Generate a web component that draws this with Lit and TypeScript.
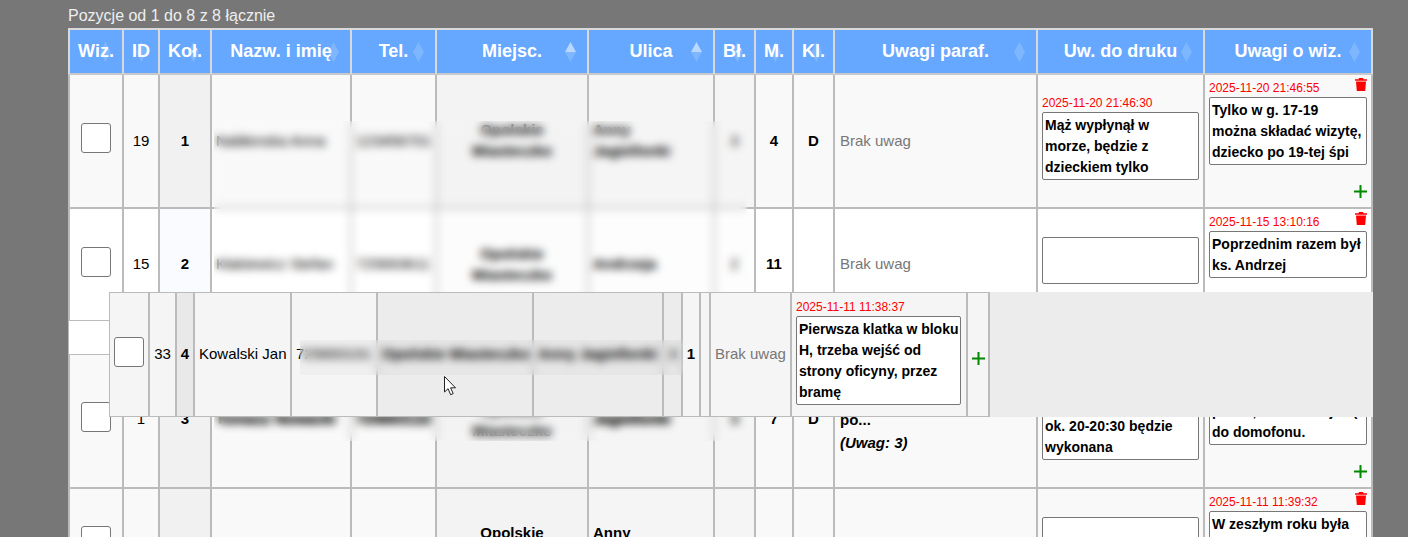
import { LitElement, html, css, nothing } from "lit";
import { customElement } from "lit/decorators.js";

const COLS = [56, 36, 52, 140, 85, 152, 126, 41, 38, 41, 203, 167, 168];
const DRAG_COLS = [41, 27, 18, 97, 86, 156, 130, 19, 18, 10, 81, 176, 22];
const HEAD: [string, string][] = [
  ["Wiz.", ""], ["ID", ""], ["Koł.", ""], ["Nazw. i imię", ""], ["Tel.", ""],
  ["Miejsc.", "asc"], ["Ulica", "asc"], ["Bł.", ""], ["M.", ""], ["Kl.", ""],
  ["Uwagi paraf.", ""], ["Uw. do druku", ""], ["Uwagi o wiz.", ""],
];

interface Row {
  cls: string; id: string; kol: string; name: string; tel: string;
  city: string; street: string; bl: string; m: string; kl: string;
  paraf: unknown; druk: { ts?: string; text: string }; wiz: { ts: string; text: string };
}

const ROWS: Row[] = [
  {
    cls: "r1 odd", id: "19", kol: "1", name: "Nabłonska Anna", tel: "123456701",
    city: "Opolskie\nMiasteczko", street: "Anny\nJagiellonki", bl: "3", m: "4", kl: "D",
    paraf: html`<span class="none">Brak uwag</span>`,
    druk: { ts: "2025-11-20 21:46:30", text: "Mąż wypłynął w\nmorze, będzie z\ndzieckiem tylko" },
    wiz: { ts: "2025-11-20 21:46:55", text: "Tylko w g. 17-19\nmożna składać wizytę,\ndziecko po 19-tej śpi" },
  },
  {
    cls: "r2 even", id: "15", kol: "2", name: "Kłakiewicz Stefan", tel: "725693611",
    city: "Opolskie\nMiasteczko", street: "Andrzeja", bl: "2", m: "11", kl: "",
    paraf: html`<span class="none">Brak uwag</span>`,
    druk: { text: "" },
    wiz: { ts: "2025-11-15 13:10:16", text: "Poprzednim razem był\nks. Andrzej" },
  },
  {
    cls: "r3 odd", id: "1", kol: "3", name: "Tomasz Nowacki", tel: "725693122",
    city: "Opolskie\nMiasteczko", street: "Jagiellonki", bl: "3", m: "7", kl: "D",
    paraf: html`<b class="stack">Prosi o telefon<br />przed wizytą, nie<br />po...<br /><i>(Uwag: 3)</i></b>`,
    druk: { ts: "2025-11-18 10:12:40", text: "Wizyta\nok. 20-20:30 będzie\nwykonana" },
    wiz: { ts: "2025-11-14 18:20:05", text: "Proszę dzwonić\npukać, bo nie ma już (\ndo domofonu." },
  },
  {
    cls: "r4 odd", id: "7", kol: "5", name: "Zielińska Maria", tel: "",
    city: "Opolskie\nMiasteczko", street: "Anny\nJagiellonki", bl: "2", m: "9", kl: "",
    paraf: html`<span class="none">Brak uwag</span>`,
    druk: { text: "" },
    wiz: { ts: "2025-11-11 11:39:32", text: "W zeszłym roku była\nwizyta" },
  },
];

const trash = html`<svg class="trash" viewBox="0 0 12 13" width="12" height="13" aria-hidden="true">
  <path fill="#f00" d="M4 0h4l.6 1.2H12v1.6H0V1.2h3.4zM1 3.6h10L10.2 13H1.8z" />
</svg>`;
const plus = html`<svg class="plus" viewBox="0 0 13 13" width="13" height="13" aria-hidden="true">
  <path fill="#080" d="M5.5 0h2v5.5H13v2H7.5V13h-2V7.5H0v-2h5.5z" />
</svg>`;
const sortIcon = (dir: string) => html`<svg class="sort" viewBox="0 0 11 20" width="11" height="20" aria-hidden="true">
  <path fill="#fff" fill-opacity=${dir === "asc" ? "0.55" : "0.16"} d="M5.5 0L11 10H0z" />
  <path fill="#fff" fill-opacity="0.16" d="M0 10h11L5.5 20z" />
</svg>`;

@customElement("app-root")
export class AppRoot extends LitElement {
  static styles = css`
    :host {
      display: block;
      position: relative;
      height: 537px;
      overflow: hidden;
      background: #777;
      font-family: "Liberation Sans", Arial, sans-serif;
      font-size: 15px;
      line-height: 21px;
      color: #000;
    }
    .info {
      height: 28px;
      box-sizing: border-box;
      padding: 7px 0 0 68px;
      font-size: 16px;
      line-height: 18px;
      color: #eee;
    }
    table {
      border-collapse: separate;
      border-spacing: 0;
      table-layout: fixed;
    }
    .main { width: 1305px; margin-left: 68px; }
    th {
      position: relative;
      z-index: 0;
      box-sizing: border-box;
      height: 47px;
      padding: 0;
      background: #66a8ff;
      color: #fff;
      font-size: 18px;
      font-weight: bold;
      text-align: center;
      border-top: 2px solid #d9d9d9;
      border-right: 2px solid #d9d9d9;
      border-bottom: 2px solid #c8c8c8;
    }
    th:first-child, .main td:first-child { border-left: 2px solid #bbb; }
    th:first-child { border-left-color: #d9d9d9; }
    .sort { position: absolute; right: 11px; top: 12px; z-index: -1; }
    td {
      box-sizing: border-box;
      padding: 0 4px 2px;
      text-align: center;
      vertical-align: middle;
      border-right: 2px solid #bbb;
      border-bottom: 2px solid #bbb;
      overflow: hidden;
      white-space: nowrap;
    }
    .odd td { background: #f9f9f9; }
    .even td { background: #fff; }
    .odd td.sort1 { background: #f1f1f1; }
    .odd td.sort2 { background: #f3f3f3; }
    .odd td.sort3 { background: #f5f5f5; }
    .even td.sort1 { background: #fafbff; }
    .even td.sort2 { background: #fcfcfc; }
    .even td.sort3 { background: #fdfdfd; }
    .r1 td { height: 134px; }
    .r2 td { height: 112px; border-bottom-width: 1px; }
    .gap td {
      height: 34px;
      background: #fff;
      border: none;
      border-left: 1px solid #bbb !important;
      border-bottom: 1px solid #bbb;
    }
    .r3 td { height: 134px; padding-bottom: 5px; }
    .r3 td.sort2 { padding-bottom: 2px; }
    .r4 td { height: 112px; }
    .left { text-align: left; }
    .pre { white-space: pre; }
    .b { font-weight: bold; }
    .r3 .name { font-weight: bold; text-shadow: 0 0 1px #000; }
    .r3 td.sort3 { text-shadow: 0 0 1px #000; }
    .none { color: #777; }
    td.paraf { text-align: left; padding: 0 5px 2px; white-space: normal; }
    .r3 td.paraf { vertical-align: bottom; padding-bottom: 33px; }
    .stack { display: block; line-height: 23px; }
    .check {
      width: 30px;
      height: 30px;
      box-sizing: border-box;
      margin: 0 auto 4px;
      background: #fff;
      border: 1px solid #777;
      border-radius: 3px;
    }
    .ts {
      font-size: 12px;
      line-height: 14px;
      color: #f00;
      text-align: left;
      margin-bottom: 2px;
    }
    .box {
      box-sizing: border-box;
      min-height: 47px;
      background: #fff;
      border: 1px solid #777;
      border-radius: 2px;
      padding: 2px 2px 1px;
      font-weight: bold;
      font-size: 14px;
      line-height: 21px;
      text-align: left;
      white-space: pre;
      overflow: hidden;
    }
    td.druk { padding: 0 4px 6px; }
    .r2 td.druk, .r4 td.druk { padding-bottom: 8px; }
    td.wiz { vertical-align: top; padding: 6px 4px 0; }
    .wizhead { display: flex; justify-content: space-between; }
    .trash { display: block; margin-top: -3px; }
    .plus { display: block; }
    .plusrow { display: flex; justify-content: flex-end; margin-top: 20px; }
    .blur {
      position: absolute;
      left: 214px;
      top: 121px;
      width: 533px;
      height: 320px;
      backdrop-filter: blur(4px);
    }
    .drag {
      position: absolute;
      left: 109px;
      top: 292px;
      width: 1264px;
      height: 125px;
      background: #ececec;
    }
    .dragrow { width: 881px; height: 125px; }
    .dragrow td {
      height: 125px;
      padding: 0 0 2px;
      background: #f5f5f5;
      border-top: 1px solid #bbb;
      border-bottom: 1px solid #bbb;
    }
    .dragrow td:first-child { border-left: 1px solid #bbb; }
    .dragrow td.sort1 { background: #e9e9e9; }
    .dragrow td.sort2 { background: #ececec; }
    .dragrow td.pl { text-align: left; padding-left: 4px; }
    .dragrow td.chk { padding-left: 4px; text-align: left; }
    .dragrow .check { margin: 0 0 4px; }
    .dragrow td.druk2 { padding: 0 5px 5px 4px; }
    .dragrow td.addcell { padding: 7px 0 0 4px; }
    .blur2 {
      position: absolute;
      left: 300px;
      top: 340px;
      width: 383px;
      height: 35px;
      background: rgba(0, 0, 0, 0.025);
      backdrop-filter: blur(4px);
    }
    .cursor { position: absolute; left: 444px; top: 376px; display: block; }
  `;

  private renderRow(r: Row) {
    return html`<tr class=${r.cls}>
      <td><div class="check"></div></td>
      <td>${r.id}</td>
      <td class="sort1 b">${r.kol}</td>
      <td class="left name">${r.name}</td>
      <td class="left name">${r.tel}</td>
      <td class="sort2 b pre">${r.city}</td>
      <td class="sort3 b left pre">${r.street}</td>
      <td class="sort3">${r.bl}</td>
      <td class="b">${r.m}</td>
      <td class="b">${r.kl}</td>
      <td class="paraf">${r.paraf}</td>
      <td class="druk">
        ${r.druk.ts ? html`<div class="ts">${r.druk.ts}</div>` : nothing}
        <div class="box">${r.druk.text}</div>
      </td>
      <td class="wiz">
        <div class="wizhead"><div class="ts">${r.wiz.ts}</div>${trash}</div>
        <div class="box">${r.wiz.text}</div>
        <div class="plusrow">${plus}</div>
      </td>
    </tr>`;
  }

  render() {
    return html`
      <div class="info">Pozycje od 1 do 8 z 8 łącznie</div>
      <table class="main">
        <colgroup>${COLS.map((w) => html`<col style="width:${w}px" />`)}</colgroup>
        <thead>
          <tr>${HEAD.map(([t, d]) => html`<th>${t}${sortIcon(d)}</th>`)}</tr>
        </thead>
        <tbody>
          ${this.renderRow(ROWS[0])}
          ${this.renderRow(ROWS[1])}
          <tr class="gap"><td colspan="13"></td></tr>
          ${this.renderRow(ROWS[2])}
          ${this.renderRow(ROWS[3])}
        </tbody>
      </table>
      <div class="blur"></div>
      <div class="drag">
        <table class="dragrow">
          <colgroup>${DRAG_COLS.map((w) => html`<col style="width:${w}px" />`)}</colgroup>
          <tbody>
            <tr>
              <td class="chk"><div class="check"></div></td>
              <td>33</td>
              <td class="sort1 b">4</td>
              <td class="pl">Kowalski Jan</td>
              <td class="pl">725693101</td>
              <td class="sort2 b pl">Opolskie Miasteczko</td>
              <td class="sort2 b pl">Anny Jagiellonki</td>
              <td class="sort2">3</td>
              <td class="b">1</td>
              <td></td>
              <td class="pl none">Brak uwag</td>
              <td class="druk2">
                <div class="ts">2025-11-11 11:38:37</div>
                <div class="box">Pierwsza klatka w bloku
H, trzeba wejść od
strony oficyny, przez
bramę</div>
              </td>
              <td class="addcell">${plus}</td>
            </tr>
          </tbody>
        </table>
      </div>
      <div class="blur2"></div>
      <svg class="cursor" viewBox="0 0 13 20" width="13" height="20" aria-hidden="true">
        <path fill="#fff" stroke="#222" stroke-width="1" d="M0.5 0.5V16l3.6-3.3 2.5 6 2.6-1.1-2.6-5.8h4.9z" />
      </svg>
    `;
  }
}
